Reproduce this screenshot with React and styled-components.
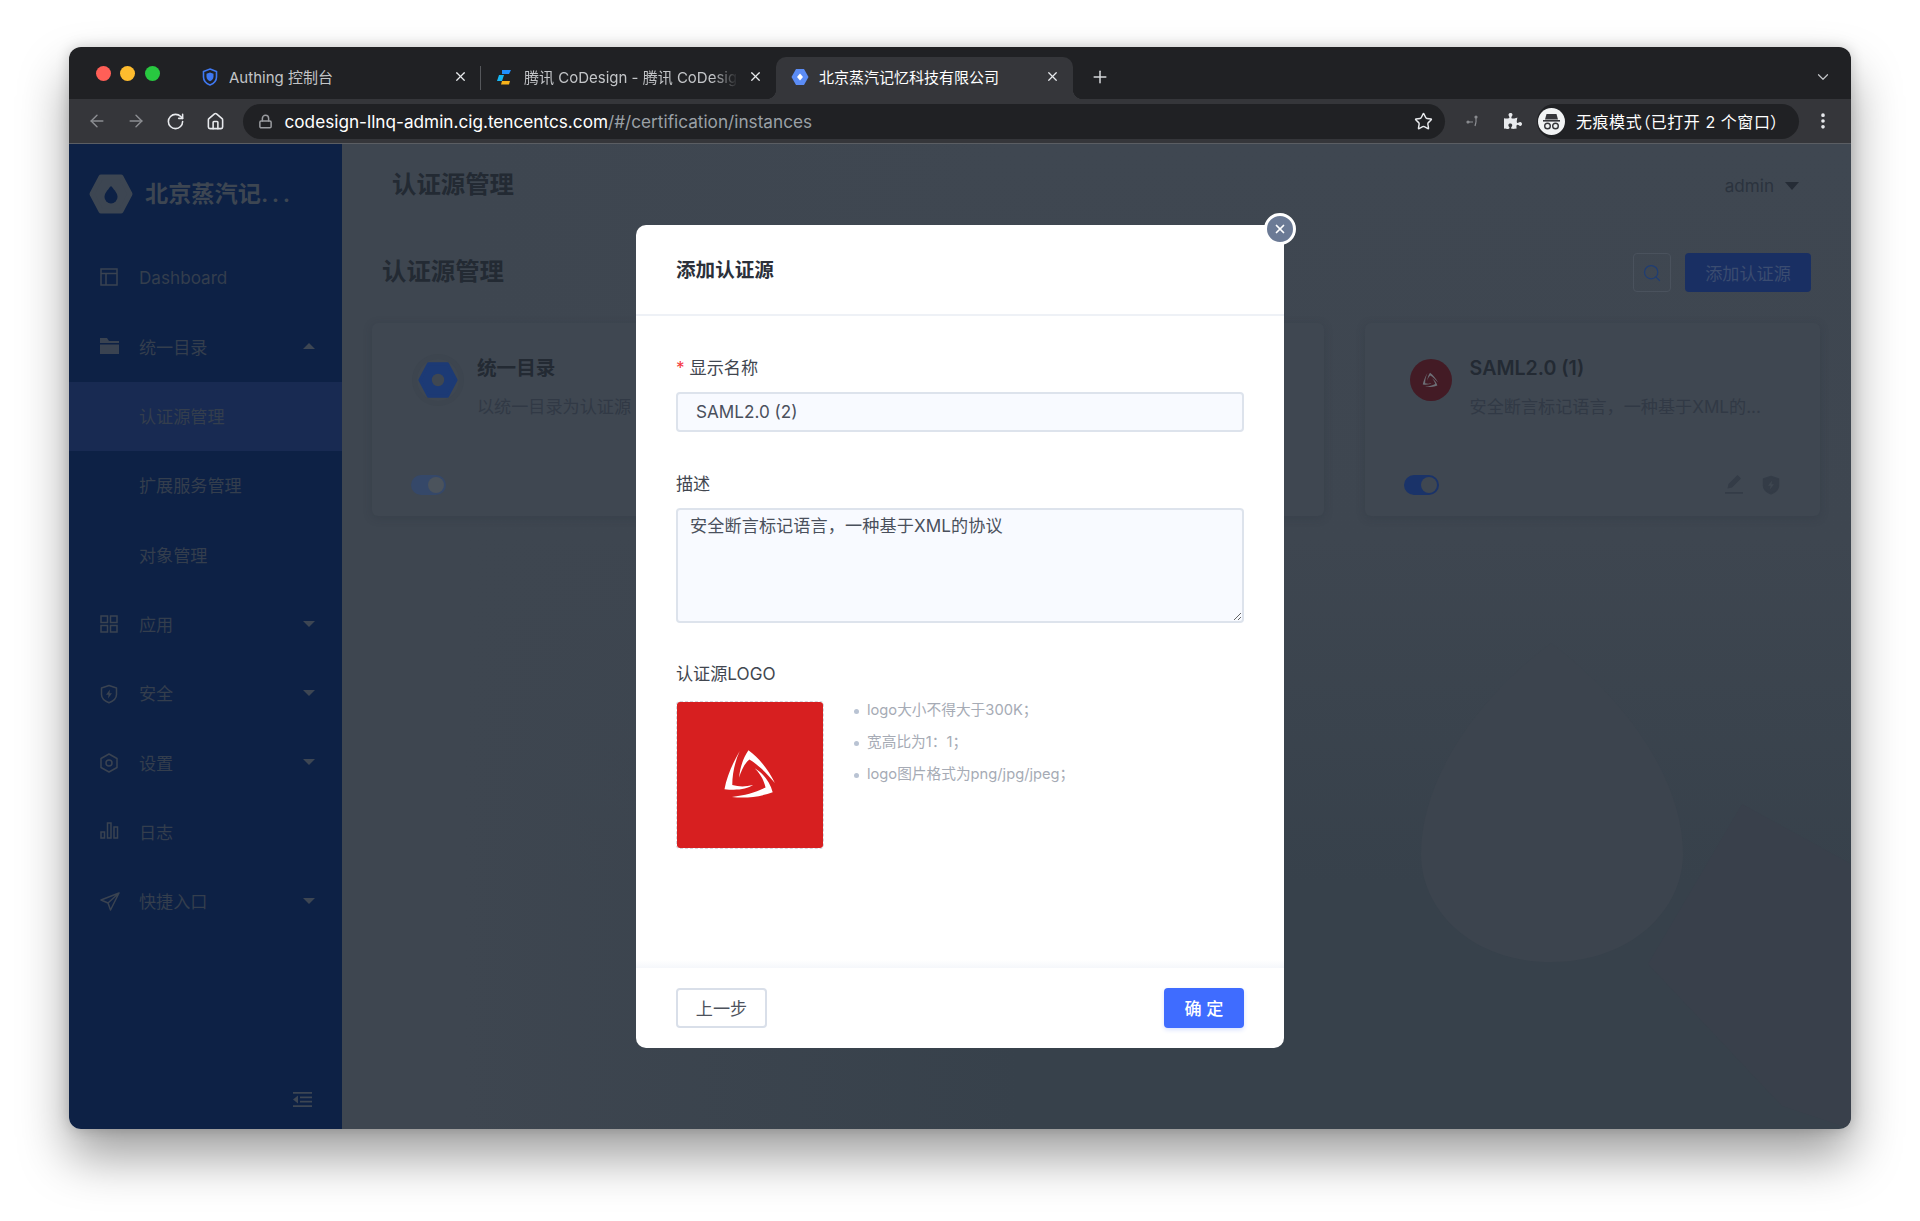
import React from "react";
import styled, { createGlobalStyle } from "styled-components";
import {
  ArrowLeft,
  ArrowRight,
  RotateCw,
  Home,
  Lock,
  Star,
  X,
  Plus,
  ChevronDown,
  EllipsisVertical,
  Search,
} from "lucide-react";
import { FaPuzzlePiece } from "react-icons/fa";

const FONT = `Inter, "Noto Sans CJK SC", sans-serif`;

const GlobalStyle = createGlobalStyle`
  html, body {
    margin: 0;
    padding: 0;
    background: #fff;
    font-family: ${FONT};
  }
  * { box-sizing: border-box; }
`;

const Page = styled.div`
  width: 1920px;
  height: 1221px;
  padding: 47px 69px 0;
  background: #fff;
  overflow: hidden;
`;

const Win = styled.div`
  position: relative;
  width: 1782px;
  height: 1082px;
  border-radius: 12px;
  overflow: hidden;
`;

const WinShadow = styled.div`
  border-radius: 12px;
  width: 1782px;
  height: 1082px;
  box-shadow: 0 28px 50px rgba(0, 0, 0, 0.38), 0 0 14px rgba(0, 0, 0, 0.18);
`;

/* browser chrome */
const TabStrip = styled.div`
  height: 52px;
  background: #202124;
  display: flex;
  align-items: flex-end;
`;

const Lights = styled.div`
  width: 117px;
  height: 100%;
  flex: none;
  display: flex;
  gap: 9.5px;
  padding: 18.5px 0 0 26.5px;
`;

const Light = styled.span`
  width: 15px;
  height: 15px;
  border-radius: 50%;
  background: ${(p) => p.$color};
`;

const Tab = styled.div`
  position: relative;
  width: ${(p) => p.$width}px;
  height: 42px;
  flex: none;
  display: flex;
  align-items: center;
  padding: 0 13px 3px 15px;
  gap: 10px;
  font-size: 15px;
  color: ${(p) => (p.$active ? "#fff" : "#c3c5c8")};
  background: ${(p) => (p.$active ? "#35363a" : "transparent")};
  border-radius: 10px 10px 0 0;
  ${(p) =>
    p.$divided &&
    `&::after {
      content: "";
      position: absolute;
      right: 0;
      top: 9px;
      height: 24px;
      width: 1px;
      background: #55575b;
    }`}
  ${(p) =>
    p.$active &&
    `&::before {
      content: "";
      position: absolute;
      left: -10px;
      bottom: 0;
      width: 10px;
      height: 10px;
      background: radial-gradient(circle at 0 0, transparent 10px, #35363a 10.5px);
    }
    &::after {
      content: "";
      position: absolute;
      right: -10px;
      bottom: 0;
      width: 10px;
      height: 10px;
      background: radial-gradient(circle at 100% 0, transparent 10px, #35363a 10.5px);
    }`}
`;

const Favicon = styled.span`
  width: 18px;
  height: 18px;
  flex: none;
  display: flex;
  svg { display: block; }
`;

const TabTitle = styled.span`
  flex: 1;
  min-width: 0;
  white-space: nowrap;
  overflow: hidden;
  ${(p) =>
    p.$fade &&
    `-webkit-mask-image: linear-gradient(90deg, #000 88%, transparent 100%);
     mask-image: linear-gradient(90deg, #000 88%, transparent 100%);`}
`;

const TabClose = styled(X)`
  flex: none;
  width: 15px;
  height: 15px;
  color: #e8eaed;
`;

const NewTab = styled.div`
  margin-left: 16.5px;
  height: 42px;
  padding-bottom: 3px;
  display: flex;
  align-items: center;
  color: #d5d7da;
`;

const TabMenu = styled.div`
  margin-left: auto;
  height: 42px;
  width: 37px;
  padding-bottom: 3px;
  display: flex;
  align-items: center;
  color: #c3c5c8;
`;

const Toolbar = styled.div`
  height: 45px;
  background: #35363a;
  border-bottom: 1px solid #5b5e63;
  display: flex;
  align-items: center;
  padding-left: 8px;
`;

const NavButton = styled.div`
  width: ${(p) => p.$width || 39.5}px;
  height: 35px;
  flex: none;
  display: flex;
  align-items: center;
  justify-content: center;
  color: ${(p) => (p.$dim ? "#8b8d91" : "#e8eaed")};
  margin-left: ${(p) => p.$gap || 0}px;
  padding-left: ${(p) => p.$nudge || 0}px;
`;

const Omnibox = styled.div`
  width: 1202px;
  height: 35px;
  margin-left: 8px;
  flex: none;
  background: #202124;
  border-radius: 18px;
  display: flex;
  align-items: center;
  padding: 0 12.5px 0 15px;
  font-size: 17.2px;
  color: #fff;
`;

const LockIcon = styled(Lock)`
  flex: none;
  color: #9a9ca0;
  margin-right: 11.5px;
`;

const UrlPath = styled.span`
  color: #9aa0a6;
`;

const StarIcon = styled(Star)`
  margin-left: auto;
  color: #e8eaed;
`;

const Pill = styled.div`
  width: 262px;
  height: 35px;
  flex: none;
  margin-left: 7px;
  background: #202124;
  border-radius: 18px;
  display: flex;
  align-items: center;
  gap: 11px;
  padding-left: 1px;
  font-size: 16px;
  letter-spacing: 0.55px;
  color: #fff;
  white-space: nowrap;
  font-feature-settings: "palt";
`;

/* app */
const AppBody = styled.div`
  display: flex;
  height: 985px;
`;

const Sidebar = styled.aside`
  width: 273px;
  flex: none;
  background: #0d2145;
  display: flex;
  flex-direction: column;
`;

const Brand = styled.div`
  height: 99.4px;
  display: flex;
  align-items: center;
  gap: 12px;
  padding: 0 0 0 20px;
  font-size: 23.2px;
  font-weight: 600;
  color: #3d4652;
  white-space: nowrap;
`;

const BrandName = styled.span`
  margin-bottom: 4px;
`;

const BrandDots = styled.span`
  letter-spacing: 3.5px;
`;

const MenuItem = styled.div`
  height: 69.3px;
  flex: none;
  display: flex;
  align-items: center;
  padding: 0 27px 2px 31px;
  font-size: 17.14px;
  color: #343e4d;
  background: ${(p) => (p.$active ? "#182a52" : "transparent")};
  svg { flex: none; }
`;

const MenuIcon = styled.span`
  width: 18px;
  height: 18px;
  margin-right: 21px;
  display: flex;
  color: #3a4351;
`;

const SubLabel = styled.span`
  padding-left: 39px;
`;

const Caret = styled.span`
  margin-left: auto;
  width: 0;
  height: 0;
  border-left: 6px solid transparent;
  border-right: 6px solid transparent;
  ${(p) => (p.$up ? "border-bottom: 6px solid #3d4653;" : "border-top: 6px solid #3d4653;")}
`;

const Collapse = styled.div`
  margin-top: auto;
  padding: 0 30px 22px 0;
  display: flex;
  justify-content: flex-end;
  color: #3d4653;
`;

const Main = styled.main`
  position: relative;
  flex: 1;
  min-width: 0;
  background:
    linear-gradient(90deg, #3e4650 0%, #3e4650 8%, rgba(62, 70, 80, 0) 45%),
    linear-gradient(180deg, #3f4751 0%, #3e4650 40%, #37414b 75%, #37414b 100%);
  overflow: hidden;
`;

const Backdrop = styled.svg`
  position: absolute;
  inset: 0;
  width: 100%;
  height: 100%;
`;

const MainInner = styled.div`
  position: relative;
`;

const TopBar = styled.header`
  height: 79px;
  display: flex;
  align-items: center;
  justify-content: space-between;
  padding: 0 52px 3px 50px;
`;

const PageTitle = styled.h1`
  margin: 0;
  font-size: 24.4px;
  font-weight: 600;
  color: #232a33;
`;

const UserMenu = styled.div`
  display: flex;
  align-items: center;
  gap: 11px;
  margin-top: 7px;
  font-size: 17.14px;
  color: #2b333e;
`;

const UserCaret = styled.span`
  width: 0;
  height: 0;
  border-left: 7px solid transparent;
  border-right: 7px solid transparent;
  border-top: 8px solid #252c36;
`;

const SectionHead = styled.div`
  display: flex;
  align-items: center;
  justify-content: space-between;
  padding: 30px 40px 0 40px;
  height: 69px;
`;

const SectionTitle = styled.h2`
  margin: 0 0 7px;
  font-size: 24.4px;
  font-weight: 600;
  color: #232a33;
`;

const HeadActions = styled.div`
  display: flex;
  gap: 14px;
`;

const SearchButton = styled.div`
  width: 38px;
  height: 39px;
  border: 1px solid #4a525d;
  border-radius: 4px;
  display: flex;
  align-items: center;
  justify-content: center;
  color: #1f3d74;
`;

const AddButton = styled.div`
  width: 126px;
  height: 39px;
  border-radius: 4px;
  background: #192f63;
  color: #3b4c70;
  font-size: 17.14px;
  display: flex;
  align-items: center;
  justify-content: center;
`;

const CardGrid = styled.div`
  display: grid;
  grid-template-columns: repeat(3, 455.3px);
  gap: 41px;
  padding: 31px 0 0 30px;
`;

const Card = styled.div`
  height: 193px;
  border-radius: 6px;
  background: #3f4751;
  box-shadow: 0 2px 8px rgba(40, 48, 58, 0.25);
  padding: 33px 40px 21px 39px;
  display: flex;
  flex-direction: column;
  justify-content: space-between;
`;

const CardTop = styled.div`
  display: flex;
  gap: 18px;
  padding-left: 6px;
`;

const CardLogo = styled.div`
  width: 42px;
  height: 42px;
  margin-top: 3px;
  flex: none;
  border-radius: 50%;
  background: ${(p) => p.$bg};
  box-shadow: ${(p) => (p.$halo ? "0 0 0 5px #3d454f" : "none")};
  display: flex;
  align-items: center;
  justify-content: center;
`;

const CardText = styled.div`
  min-width: 0;
  flex: 1;
`;

const CardTitle = styled.div`
  font-size: 19.6px;
  line-height: 24px;
  font-weight: 600;
  color: #232a33;
`;

const CardDesc = styled.div`
  margin-top: 15px;
  font-size: 17.14px;
  line-height: 24px;
  color: #313945;
  white-space: nowrap;
`;

const CardFoot = styled.div`
  display: flex;
  align-items: center;
  justify-content: space-between;
`;

const Toggle = styled.span`
  width: 35px;
  height: 20px;
  border-radius: 10px;
  background: ${(p) => (p.$dim ? "#354869" : "#1a3369")};
  display: flex;
  justify-content: flex-end;
  align-items: center;
  padding-right: 2px;
  &::after {
    content: "";
    width: 16px;
    height: 16px;
    border-radius: 50%;
    background: ${(p) => (p.$dim ? "#4b535c" : "#3f4751")};
  }
`;

const CardActions = styled.div`
  display: flex;
  gap: 18px;
  color: #343c47;
`;

/* modal */
const Modal = styled.div`
  position: absolute;
  left: 567px;
  top: 178px;
  width: 648px;
  height: 823px;
  background: #fff;
  border-radius: 10px;
  display: flex;
  flex-direction: column;
`;

const CloseButton = styled.div`
  position: absolute;
  right: -12px;
  top: -12px;
  width: 32px;
  height: 32px;
  border-radius: 50%;
  background: #6b7a95;
  border: 3px solid #fff;
  color: #fff;
  display: flex;
  align-items: center;
  justify-content: center;
`;

const ModalHead = styled.div`
  height: 91px;
  flex: none;
  display: flex;
  align-items: center;
  padding: 0 40px 2px;
  border-bottom: 2px solid #eef1f6;
  font-size: 19.6px;
  font-weight: 600;
  color: #2b303a;
`;

const ModalBody = styled.div`
  flex: 1;
  padding: 41px 40px 0;
  background: linear-gradient(180deg, transparent calc(100% - 8px), #f5f7fb 100%);
`;

const Label = styled.div`
  font-size: 17.14px;
  line-height: 22px;
  color: #41464f;
  margin-top: ${(p) => p.$top || 0}px;
  margin-bottom: ${(p) => p.$bottom || 13}px;
`;

const Required = styled.span`
  color: #f5383b;
  margin-right: 5px;
`;

const TextInput = styled.input`
  display: block;
  width: 100%;
  height: 40px;
  padding: 0 18px 2px;
  border: 2px solid #dde3ec;
  border-radius: 4px;
  background: #f8faff;
  outline: none;
  font: 17.14px ${FONT};
  color: #4a505c;
`;

const TextArea = styled.textarea`
  display: block;
  width: 100%;
  height: 115px;
  padding: 4px 12px;
  border: 2px solid #dde3ec;
  border-radius: 4px;
  background: #f8faff;
  outline: none;
  font: 17.14px/24px ${FONT};
  letter-spacing: 0.1px;
  color: #4a505c;
`;

const UploadRow = styled.div`
  display: flex;
  align-items: flex-start;
  gap: 30px;
`;

const Upload = styled.div`
  width: 148px;
  height: 148px;
  flex: none;
  border: 1px dashed #d3d7de;
  border-radius: 4px;
  background: #d71f20;
  background-clip: padding-box;
  display: flex;
  align-items: center;
  justify-content: center;
`;

const Tips = styled.ul`
  list-style: none;
  margin: -7px 0 0;
  padding: 0;
  font-size: 14.7px;
  line-height: 32px;
  color: #a6abb5;
`;

const Tip = styled.li`
  display: flex;
  align-items: center;
  gap: 8px;
  white-space: nowrap;
  &::before {
    content: "";
    width: 5px;
    height: 5px;
    margin-top: 3px;
    border-radius: 50%;
    background: #b9c3d3;
  }
`;

const ModalFoot = styled.div`
  height: 80px;
  flex: none;
  padding: 20px 40px 0;
  display: flex;
  justify-content: space-between;
  align-items: flex-start;
`;

const BackButton = styled.div`
  width: 91px;
  height: 40px;
  padding-bottom: 2px;
  border: 2px solid #d9dfe9;
  border-radius: 4px;
  color: #4d525c;
  font-size: 17.14px;
  display: flex;
  align-items: center;
  justify-content: center;
`;

const OkButton = styled.div`
  width: 80px;
  height: 40px;
  padding-bottom: 2px;
  border-radius: 4px;
  background: #3f6cff;
  color: #fff;
  font-size: 17.14px;
  font-weight: 500;
  display: flex;
  align-items: center;
  justify-content: center;
  box-shadow: 0 2px 4px rgba(63, 108, 255, 0.2);
`;

const HexLogo = ({ size, fill, hole, drop, stroke = 5 }) => (
  <svg width={size} height={size} viewBox="0 0 44 40">
    <polygon
      points="12,3 32,3 41,20 32,37 12,37 3,20"
      fill={fill}
      stroke={fill}
      strokeWidth={stroke}
      strokeLinejoin="round"
    />
    {drop ? (
      <path d="M22 12c4 4.500 6.500 7.500 6.500 11a6.500 6.500 0 0 1-13 0c0-3.500 2.500-6.500 6.500-11z" fill={hole} />
    ) : (
      <circle cx="22" cy="20" r="6.500" fill={hole} />
    )}
  </svg>
);

const SamlMark = ({ size, color }) => (
  <svg width={size} height={size * 0.97} viewBox="150 145 180 170">
    <path fill={color} d="M207 152C185 190 165 235 158 275C195 280 230 276 250 262C225 268 205 268 183 262C183 225 192 185 207 152Z" />
    <path fill={color} d="M205 238C208 205 218 175 235 150C270 175 300 215 320 255C295 225 265 195 238 180C222 192 212 215 205 238Z" />
    <path fill={color} d="M255 208C285 225 305 255 313 285C272 300 225 305 182 300C225 296 260 285 290 270C285 245 272 225 255 208Z" />
  </svg>
);

const ShieldBolt = ({ filled }) => (
  <svg width="18" height="20" viewBox="0 0 18 20">
    <path
      d="M9 1.500L16.500 4v6.500c0 4-3.500 6.700-7.500 8.300-4-1.600-7.500-4.300-7.500-8.300V4z"
      fill={filled ? "currentColor" : "none"}
      stroke="currentColor"
      strokeWidth="1.500"
      strokeLinejoin="round"
    />
    <path d="M10 5.500L6 10.800h2.500L8 14.500l4-5.300H9.500z" fill={filled ? "#3f4751" : "currentColor"} />
  </svg>
);

const menu = [
  {
    label: "Dashboard",
    icon: (
      <svg width="18" height="18" viewBox="0 0 18 18" fill="none" stroke="currentColor" strokeWidth="1.500">
        <rect x="1" y="1" width="16" height="16" />
        <path d="M1 5.500h16M6 5.500V17" />
      </svg>
    ),
  },
  {
    label: "统一目录",
    caret: "up",
    icon: (
      <svg width="19" height="18" viewBox="0 0 19 18" fill="currentColor">
        <path d="M0 1h7l2 3h10v2H0zM0 7.500h19V17H0z" />
      </svg>
    ),
  },
  { label: "认证源管理", sub: true, active: true },
  { label: "扩展服务管理", sub: true },
  { label: "对象管理", sub: true },
  {
    label: "应用",
    caret: "down",
    icon: (
      <svg width="18" height="18" viewBox="0 0 18 18" fill="none" stroke="currentColor" strokeWidth="1.500">
        <rect x="1" y="1" width="6.500" height="6.500" />
        <rect x="10.500" y="1" width="6.500" height="6.500" />
        <rect x="1" y="10.500" width="6.500" height="6.500" />
        <rect x="10.500" y="10.500" width="6.500" height="6.500" />
      </svg>
    ),
  },
  { label: "安全", caret: "down", icon: <ShieldBolt /> },
  {
    label: "设置",
    caret: "down",
    icon: (
      <svg width="18" height="20" viewBox="0 0 18 20" fill="none" stroke="currentColor" strokeWidth="1.500">
        <path d="M9 1l8 4.500v9L9 19l-8-4.500v-9z" strokeLinejoin="round" />
        <circle cx="9" cy="10" r="3" />
      </svg>
    ),
  },
  {
    label: "日志",
    icon: (
      <svg width="19" height="17" viewBox="0 0 19 17" fill="none" stroke="currentColor" strokeWidth="1.500">
        <rect x="1" y="10" width="3.500" height="6" />
        <rect x="7.500" y="1" width="3.500" height="15" />
        <rect x="14" y="5" width="3.500" height="11" />
      </svg>
    ),
  },
  {
    label: "快捷入口",
    caret: "down",
    icon: (
      <svg width="20" height="19" viewBox="0 0 20 19" fill="none" stroke="currentColor" strokeWidth="1.500">
        <path d="M19 1L1 8l7 3 2.500 7zM19 1L8 11" strokeLinejoin="round" />
      </svg>
    ),
  },
];

export default function App() {
  return (
    <Page>
      <GlobalStyle />
      <WinShadow>
        <Win>
          <TabStrip>
            <Lights>
              <Light $color="#ff5f57" />
              <Light $color="#febc2e" />
              <Light $color="#28c840" />
            </Lights>
            <Tab $width={295} $divided>
              <Favicon>
                <svg width="18" height="18" viewBox="0 0 18 18" fill="none">
                  <path d="M9 1l6.500 2.500v5.500c0 4-3 6.700-6.500 8-3.500-1.300-6.500-4-6.500-8V3.500z" stroke="#3f78f2" strokeWidth="1.600" />
                  <path d="M9 4.500l3.500 1.300v3c0 2.200-1.600 3.700-3.500 4.500-1.900-.8-3.500-2.300-3.500-4.500v-3z" fill="#3f78f2" />
                </svg>
              </Favicon>
              <TabTitle>Authing 控制台</TabTitle>
              <TabClose size={15} strokeWidth={2} />
            </Tab>
            <Tab $width={295}>
              <Favicon>
                <svg width="18" height="18" viewBox="0 0 18 18">
                  <path d="M6 2h9l-2 4H6z" fill="#1f8fff" />
                  <path d="M3 7h5l-2 6H1z" fill="#17b6f2" />
                  <path d="M6 13h8l-1 3.500H5z" fill="#f5b21a" />
                </svg>
              </Favicon>
              <TabTitle $fade>腾讯 CoDesign - 腾讯 CoDesign</TabTitle>
              <TabClose size={15} strokeWidth={2} />
            </Tab>
            <Tab $width={297} $active>
              <Favicon>
                <svg width="18" height="18" viewBox="0 0 18 18">
                  <path d="M5 1h8L17.500 9 13 17H5L.500 9z" fill="#5b8cf5" />
                  <path d="M9 5.500L12 9 9 12.500 6 9z" fill="#fff" />
                </svg>
              </Favicon>
              <TabTitle>北京蒸汽记忆科技有限公司</TabTitle>
              <TabClose size={15} strokeWidth={2} />
            </Tab>
            <NewTab>
              <Plus size={20} strokeWidth={1.8} />
            </NewTab>
            <TabMenu>
              <ChevronDown size={18} strokeWidth={1.6} />
            </TabMenu>
          </TabStrip>
          <Toolbar>
            <NavButton $dim>
              <ArrowLeft size={20} strokeWidth={1.7} />
            </NavButton>
            <NavButton $dim>
              <ArrowRight size={20} strokeWidth={1.7} />
            </NavButton>
            <NavButton>
              <RotateCw size={19} strokeWidth={2} />
            </NavButton>
            <NavButton>
              <Home size={19} strokeWidth={2} />
            </NavButton>
            <Omnibox>
              <LockIcon size={15} strokeWidth={2.4} />
              <span>
                codesign-llnq-admin.cig.tencentcs.com
                <UrlPath>/#/certification/instances</UrlPath>
              </span>
              <StarIcon size={19} strokeWidth={1.8} />
            </Omnibox>
            <NavButton $width={38} $gap={9} $dim>
              <svg width="16" height="16" viewBox="0 0 16 16" fill="none" stroke="#8b8d91" strokeWidth="1.200">
                <path d="M3 9h5M11 4v5M10 13l1-4" />
                <circle cx="11" cy="4" r="1" fill="#8b8d91" />
                <circle cx="3" cy="9" r="1" fill="#8b8d91" />
              </svg>
            </NavButton>
            <NavButton $width={38} $nudge={4}>
              <FaPuzzlePiece size={18} />
            </NavButton>
            <Pill>
              <svg width="27" height="27" viewBox="0 0 27 27">
                <circle cx="13.500" cy="13.500" r="13.500" fill="#f1f3f4" />
                <path d="M8.500 6h10l1.500 5.500H7z" fill="#35363a" />
                <rect x="5" y="12" width="17" height="1.600" fill="#35363a" />
                <circle cx="9.500" cy="18" r="2.800" fill="none" stroke="#35363a" strokeWidth="1.400" />
                <circle cx="17.500" cy="18" r="2.800" fill="none" stroke="#35363a" strokeWidth="1.400" />
              </svg>
              无痕模式（已打开 2 个窗口）
            </Pill>
            <NavButton $width={38} $gap={4} $nudge={2}>
              <EllipsisVertical size={20} strokeWidth={2.4} />
            </NavButton>
          </Toolbar>
          <AppBody>
            <Sidebar>
              <Brand>
                <HexLogo size={44} fill="#3d4652" hole="#0d2145" drop />
                <BrandName>
                  北京蒸汽记<BrandDots>...</BrandDots>
                </BrandName>
              </Brand>
              {menu.map((item) => (
                <MenuItem key={item.label} $active={item.active}>
                  {item.icon && <MenuIcon>{item.icon}</MenuIcon>}
                  {item.sub ? <SubLabel>{item.label}</SubLabel> : item.label}
                  {item.caret && <Caret $up={item.caret === "up"} />}
                </MenuItem>
              ))}
              <Collapse>
                <svg width="19" height="15" viewBox="0 0 19 15" fill="currentColor">
                  <path d="M0 0h19v1.800H0zM7 4.500h12v1.800H7zM7 8.700h12v1.800H7zM0 13.200h19V15H0zM5 3.500v8L0 7.500z" />
                </svg>
              </Collapse>
            </Sidebar>
            <Main>
              <Backdrop viewBox="0 0 1509 985" preserveAspectRatio="none">
                <polygon points="1306,820 1440,962 1509,985 1509,720 1400,660" fill="#39404b" />
                <path
                  d="M1209 499C1290 560 1341 640 1341 710C1341 765 1290 818 1209 818C1128 818 1079 765 1079 710C1079 640 1128 560 1209 499Z"
                  fill="#3c444e"
                />
              </Backdrop>
              <MainInner>
                <TopBar>
                  <PageTitle>认证源管理</PageTitle>
                  <UserMenu>
                    admin
                    <UserCaret />
                  </UserMenu>
                </TopBar>
                <SectionHead>
                  <SectionTitle>认证源管理</SectionTitle>
                  <HeadActions>
                    <SearchButton>
                      <Search size={20} strokeWidth={1.5} />
                    </SearchButton>
                    <AddButton>添加认证源</AddButton>
                  </HeadActions>
                </SectionHead>
                <CardGrid>
                  <Card>
                    <CardTop>
                      <CardLogo $bg="transparent" $halo>
                        <HexLogo size={42} fill="#1c3a75" hole="#3f4751" stroke={3} />
                      </CardLogo>
                      <CardText>
                        <CardTitle>统一目录</CardTitle>
                        <CardDesc>以统一目录为认证源</CardDesc>
                      </CardText>
                    </CardTop>
                    <CardFoot>
                      <Toggle $dim />
                    </CardFoot>
                  </Card>
                  <Card />
                  <Card>
                    <CardTop>
                      <CardLogo $bg="#431b25">
                        <SamlMark size={17} color="#6d6f76" />
                      </CardLogo>
                      <CardText>
                        <CardTitle>SAML2.0 (1)</CardTitle>
                        <CardDesc>安全断言标记语言，一种基于XML的...</CardDesc>
                      </CardText>
                    </CardTop>
                    <CardFoot>
                      <Toggle />
                      <CardActions>
                        <svg width="20" height="19" viewBox="0 0 20 19" fill="currentColor">
                          <path d="M13.500 0l3.500 3.500-9 9-4.500 1 1-4.500zM1 17h18v1.800H1z" />
                        </svg>
                        <ShieldBolt filled />
                      </CardActions>
                    </CardFoot>
                  </Card>
                </CardGrid>
              </MainInner>
            </Main>
          </AppBody>
          <Modal>
            <CloseButton>
              <X size={14} strokeWidth={3} />
            </CloseButton>
            <ModalHead>添加认证源</ModalHead>
            <ModalBody>
              <Label>
                <Required>*</Required>显示名称
              </Label>
              <TextInput readOnly value="SAML2.0 (2)" />
              <Label $top={41}>描述</Label>
              <TextArea readOnly value="安全断言标记语言，一种基于XML的协议" />
              <Label $top={40} $bottom={16}>
                认证源LOGO
              </Label>
              <UploadRow>
                <Upload>
                  <SamlMark size={56} color="#fff" />
                </Upload>
                <Tips>
                  <Tip>logo大小不得大于300K；</Tip>
                  <Tip>宽高比为1：1；</Tip>
                  <Tip>logo图片格式为png/jpg/jpeg；</Tip>
                </Tips>
              </UploadRow>
            </ModalBody>
            <ModalFoot>
              <BackButton>上一步</BackButton>
              <OkButton>确 定</OkButton>
            </ModalFoot>
          </Modal>
        </Win>
      </WinShadow>
    </Page>
  );
}
